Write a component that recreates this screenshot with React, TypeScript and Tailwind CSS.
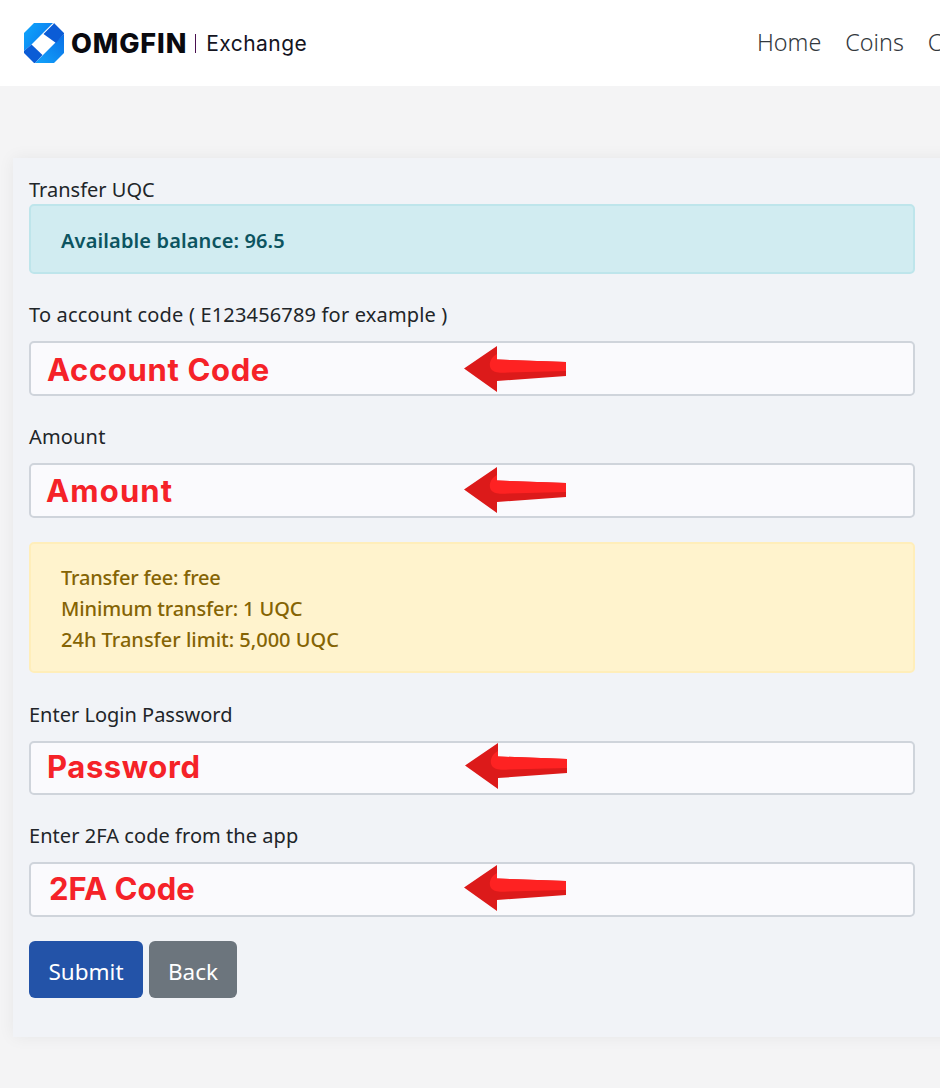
const Arrow = ({ className }: { className: string }) => (
  <svg className={className} width="104" height="48" viewBox="0 0 104 48">
    <path d="M0 22.5 L33 0 L33 13.5 L102 16 L102 30 L33 35 L33 46 Z" fill="#dc1a1a" />
    <path d="M33 8 C27 11 24 18 27 23 C30 27 36 27 44 26.5 L102 25 V16 L33 13.5 Z" fill="#fe2222" />
  </svg>
);

const Field = ({ text, textClass, arrowClass, h }: { text: string; textClass: string; arrowClass: string; h: string }) => (
  <div className={`relative ${h} w-[886px] rounded-[5px] border-2 border-[#cfd4db] bg-[#fafafd]`}>
    <span className={`absolute font-['Inter',sans-serif] text-[31px] leading-[40px] font-bold whitespace-nowrap text-[#f52228] ${textClass}`}>{text}</span>
    <Arrow className={`absolute ${arrowClass}`} />
  </div>
);

const Label = ({ children, cls }: { children: string; cls: string }) => (
  <div className={`text-[20px] leading-[28px] font-[450] text-[#212529] ${cls}`}>{children}</div>
);

export default function App() {
  return (
    <div className="h-[1088px] w-[940px] overflow-hidden bg-[#f4f4f5] font-['Noto_Sans',sans-serif]">
      <header className="flex h-[86px] items-center justify-between overflow-hidden bg-white pl-6">
        <div className="flex items-center">
          <svg width="40" height="40" viewBox="0 0 40 40">
            <defs>
              <linearGradient id="lg1" x1="0" y1="0" x2="1" y2="0.6">
                <stop offset="0" stopColor="#10a8fc" />
                <stop offset="1" stopColor="#0a78ee" />
              </linearGradient>
              <linearGradient id="lg2" x1="0" y1="1" x2="1" y2="0">
                <stop offset="0" stopColor="#12a4fb" />
                <stop offset="1" stopColor="#0a6fe6" />
              </linearGradient>
            </defs>
            <path d="M10 0 H30 L40 10 V30 L30 40 H10 L0 30 V10 Z" fill="#ffffff" />
            <path d="M10 0 H29 L7.5 21.5 L0 28 V10 Z" fill="url(#lg1)" />
            <path d="M40 11 V30 L30 40 H11 Z" fill="url(#lg2)" />
            <path d="M19.5 11 L29.5 1 L30 0 L40 10 V11 L32 20 Z" fill="#0b5cd6" />
            <path d="M7.5 21.5 L18.5 32 L11 40 H10 L0 30 V28 Z" fill="#0b5cd6" />
          </svg>
          <span className="ml-[7px] font-['Inter',sans-serif] text-[27px] leading-none font-extrabold tracking-[0.9px] text-[#0a0a0f]">OMGFIN</span>
          <span className="ml-[8px] h-[19px] w-px bg-[#4a1050]" />
          <span className="ml-[10px] font-['Inter',sans-serif] text-[21px] leading-none tracking-[0.45px] text-[#14141f]">Exchange</span>
        </div>
        <nav className="flex w-[183px] shrink-0 gap-6 overflow-hidden text-[23.3px] leading-none font-light whitespace-nowrap text-[#33383d]">
          <span>Home</span>
          <span>Coins</span>
          <span>Contact</span>
        </nav>
      </header>
      <main className="ml-[13px] mt-[72px] h-[879px] w-[960px] bg-[#f1f3f7] pt-[18px] pl-4 shadow-[0_0_16px_rgba(0,0,0,0.06)]">
        <Label cls="">Transfer UQC</Label>
        <div className="flex h-[70px] w-[886px] items-center rounded-[5px] border-2 border-[#bee5eb] bg-[#d1ecf1] pt-[3px] pl-[30px] text-[20px] font-semibold tracking-[0.13px] text-[#0c5460]">
          Available balance: 96.5
        </div>
        <Label cls="mt-[27px] mb-[12px] tracking-[0.17px]">To account code ( E123456789 for example )</Label>
        <Field h="h-[55px]" text="Account Code" textClass="left-[16px] top-[7px] tracking-[0.65px]" arrowClass="left-[433px] top-[3px]" />
        <Label cls="mt-[27px] mb-[12px] tracking-[0.17px]">Amount</Label>
        <Field h="h-[55px]" text="Amount" textClass="left-[15px] top-[6px] tracking-[1.15px]" arrowClass="left-[433px] top-[2px]" />
        <div className="mt-[24px] h-[131px] w-[886px] rounded-[5px] border-2 border-[#ffeeba] bg-[#fff3cd] pt-[18px] pl-[30px] text-[20px] leading-[31px] font-medium text-[#856404]">
          <div className="tracking-[-0.2px]">Transfer fee: free</div>
          <div className="tracking-[-0.13px]">Minimum transfer: 1 UQC</div>
          <div>24h Transfer limit: 5,000 UQC</div>
        </div>
        <Label cls="mt-[28px] mb-[12px]">Enter Login Password</Label>
        <Field h="h-[54px]" text="Password" textClass="left-[16px] top-[4px] tracking-[0.6px]" arrowClass="left-[434px] top-0" />
        <Label cls="mt-[27px] mb-[12px] tracking-[0.05px]">Enter 2FA code from the app</Label>
        <Field h="h-[55px]" text="2FA Code" textClass="left-[18px] top-[5px] tracking-[0.05px]" arrowClass="left-[433px] top-[1px]" />
        <div className="mt-[24px] flex gap-[6px] text-[22.5px] text-white">
          <button className="flex h-[57px] w-[114px] items-center justify-center rounded-[6px] bg-[#2353a8] pt-[5px]">Submit</button>
          <button className="flex h-[57px] w-[88px] items-center justify-center rounded-[6px] bg-[#6c757d] pt-[5px]">Back</button>
        </div>
      </main>
    </div>
  );
}
